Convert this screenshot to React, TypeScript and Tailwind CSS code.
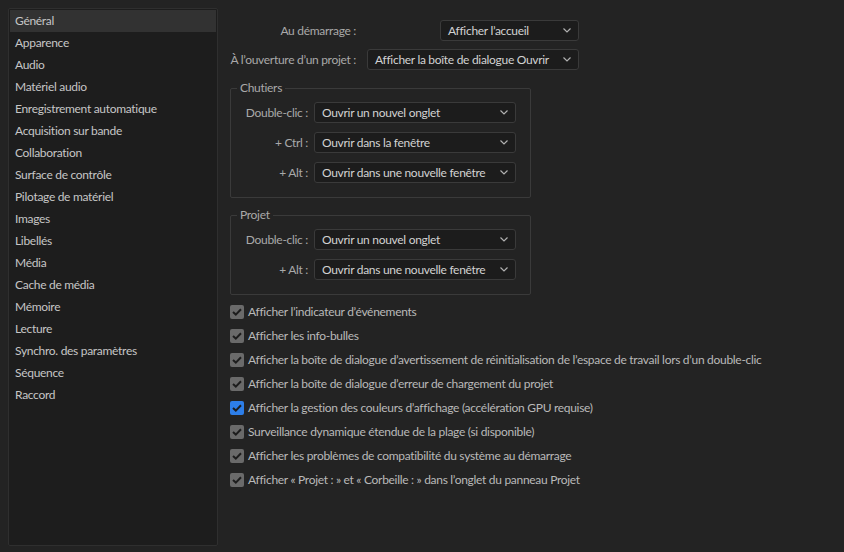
import React from 'react';

const sidebarItems = [
  'Général',
  'Apparence',
  'Audio',
  'Matériel audio',
  'Enregistrement automatique',
  'Acquisition sur bande',
  'Collaboration',
  'Surface de contrôle',
  'Pilotage de matériel',
  'Images',
  'Libellés',
  'Média',
  'Cache de média',
  'Mémoire',
  'Lecture',
  'Synchro. des paramètres',
  'Séquence',
  'Raccord',
];

const checks = [
  { label: 'Afficher l’indicateur d’événements', blue: false },
  { label: 'Afficher les info-bulles', blue: false },
  {
    label:
      'Afficher la boîte de dialogue d’avertissement de réinitialisation de l’espace de travail lors d’un double-clic',
    blue: false,
  },
  { label: 'Afficher la boîte de dialogue d’erreur de chargement du projet', blue: false },
  { label: 'Afficher la gestion des couleurs d’affichage (accélération GPU requise)', blue: true },
  { label: 'Surveillance dynamique étendue de la plage (si disponible)', blue: false },
  { label: 'Afficher les problèmes de compatibilité du système au démarrage', blue: false },
  { label: 'Afficher « Projet : » et « Corbeille : » dans l’onglet du panneau Projet', blue: false },
];

const Chevron = () => (
  <svg width="8" height="5" viewBox="0 0 8 5" fill="none" className="shrink-0">
    <path d="M0.5 0.5 L4 4 L7.5 0.5" stroke="#b0b0b0" strokeWidth="1.2" />
  </svg>
);

const Select = ({ value, width }: { value: string; width: string }) => (
  <div
    className={`${width} h-[21px] flex items-center justify-between pl-[7px] pr-[7px] bg-[#1c1c1c] border border-[#3a3a3a] rounded-[3px] text-[#d2d2d2] whitespace-nowrap`}
  >
    <span>{value}</span>
    <Chevron />
  </div>
);

const Row = ({ label, value }: { label: string; value: string }) => (
  <div className="flex items-center h-[21px]">
    <span className="w-[77px] pr-[6px] text-right text-[#a9a9a9] whitespace-nowrap">{label}</span>
    <Select value={value} width="w-[202px]" />
  </div>
);

const Group = ({ title, children }: { title: string; children: React.ReactNode }) => (
  <div className="relative w-[301px] border border-[#3a3a3a] rounded-[2px] pt-[13px] pb-[14px] pl-[6px] flex flex-col gap-[9px]">
    <span className="absolute -top-[9px] left-[6px] px-[3px] bg-[#232323] text-[#a9a9a9] leading-[16px]">
      {title}
    </span>
    {children}
  </div>
);

const CheckBox = ({ blue }: { blue: boolean }) => (
  <div
    className={`w-[14px] h-[14px] rounded-[2px] flex items-center justify-center shrink-0 ${
      blue ? 'bg-[#2d7ee8]' : 'bg-[#6a6a6a]'
    }`}
  >
    <svg width="10" height="8" viewBox="0 0 10 8" fill="none">
      <path d="M1 4 L3.8 6.6 L9 1.2" stroke="#1d1d1d" strokeWidth="2" />
    </svg>
  </div>
);

export default function App() {
  return (
    <div
      className="w-[844px] h-[552px] bg-[#232323] flex text-[12px] tracking-[-0.3px] overflow-hidden"
      style={{ fontFamily: 'Lato, "Noto Sans", sans-serif' }}
    >
      {/* Sidebar */}
      <div className="ml-[8px] mt-[8px] w-[210px] h-[538px] bg-[#1d1d1d] border border-[#2f2f2f] rounded-[2px] p-[1px]">
        {sidebarItems.map((item, i) => (
          <div
            key={item}
            className={`h-[22px] leading-[22px] pl-[5px] text-[#c6c6c6] ${
              i === 0 ? 'bg-[#323232]' : ''
            }`}
          >
            {item}
          </div>
        ))}
      </div>

      {/* Content */}
      <div className="ml-[12px] pt-[20px] flex flex-col">
        <div className="w-[349px] flex items-center h-[21px]">
          <span className="w-[126px] text-right text-[#a9a9a9] whitespace-nowrap">Au démarrage :</span>
          <div className="flex-1 flex justify-end">
            <Select value="Afficher l’accueil" width="w-[139px]" />
          </div>
        </div>
        <div className="w-[349px] flex items-center h-[21px] mt-[8px]">
          <span className="w-[126px] text-right text-[#a9a9a9] whitespace-nowrap">À l’ouverture d’un projet :</span>
          <div className="flex-1 flex justify-end">
            <Select value="Afficher la boîte de dialogue Ouvrir" width="w-[212px]" />
          </div>
        </div>

        <div className="mt-[18px]">
          <Group title="Chutiers">
            <Row label="Double-clic :" value="Ouvrir un nouvel onglet" />
            <Row label="+ Ctrl :" value="Ouvrir dans la fenêtre" />
            <Row label="+ Alt :" value="Ouvrir dans une nouvelle fenêtre" />
          </Group>
        </div>

        <div className="mt-[17px]">
          <Group title="Projet">
            <Row label="Double-clic :" value="Ouvrir un nouvel onglet" />
            <Row label="+ Alt :" value="Ouvrir dans une nouvelle fenêtre" />
          </Group>
        </div>

        <div className="mt-[5px] flex flex-col">
          {checks.map((c) => (
            <div key={c.label} className="flex items-center h-[24px] gap-[4px]">
              <CheckBox blue={c.blue} />
              <span className="text-[#b9b9b9] whitespace-nowrap">{c.label}</span>
            </div>
          ))}
        </div>
      </div>
    </div>
  );
}
